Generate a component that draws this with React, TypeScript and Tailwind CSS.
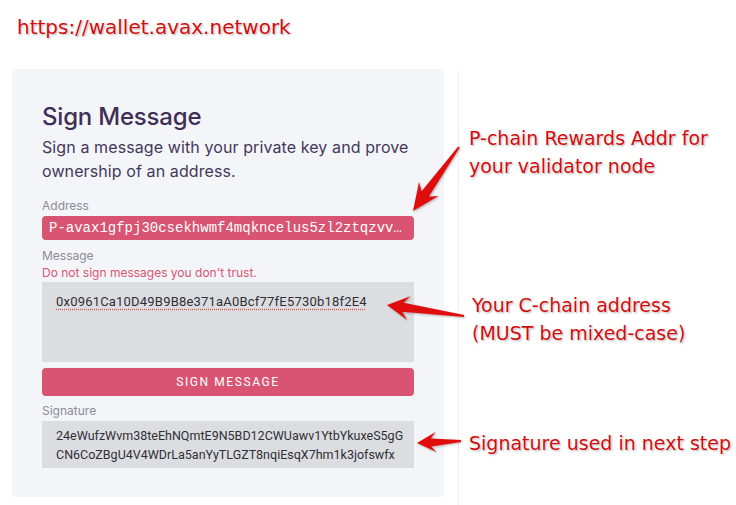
import React from "react";

type Pt = [number, number];

function arrowPoints(tail: Pt, tip: Pt, headLen: number, headHalf: number, shaftTip: number, shaftTail: number, notch: number): string {
  const dx = tip[0] - tail[0];
  const dy = tip[1] - tail[1];
  const len = Math.hypot(dx, dy);
  const ux = dx / len;
  const uy = dy / len;
  const nx = -uy;
  const ny = ux;
  const at = (d: number, s: number): Pt => [tail[0] + ux * d + nx * s, tail[1] + uy * d + ny * s];
  const hb = len - headLen;
  const pts: Pt[] = [
    at(0, shaftTail),
    at(hb + notch, shaftTip),
    at(hb, headHalf),
    at(len, 0),
    at(hb, -headHalf),
    at(hb + notch, -shaftTip),
    at(0, -shaftTail),
  ];
  return pts.map((p) => `${p[0].toFixed(1)},${p[1].toFixed(1)}`).join(" ");
}

const annotBase =
  "text-[#d10c0c] leading-[28px] font-['DejaVu_Sans',sans-serif] [text-shadow:0_0_2px_#fff,0_0_2px_#fff,1px_1px_2px_#9a9a9a] whitespace-nowrap";
const annot = annotBase + " text-[19px]";

const label = "text-[12px] leading-[14px] text-[#8b8b95]";

export default function App() {
  return (
    <div className="relative w-[736px] h-[505px] bg-white overflow-hidden font-['Inter',sans-serif] flex flex-col">
      <div className={annotBase + " text-[20px] pl-[17px] pt-[13px] h-[69px]"}>https://wallet.avax.network</div>

      <div className="flex flex-1">
        <div className="pl-[12px] pr-[14px]">
          <div className="w-[432px] h-[428px] bg-[#f4f5f9] rounded-[4px] px-[30px] pt-[34px] flex flex-col">
            <h1 className="text-[24px] leading-[28px] font-medium text-[#3e2f55] tracking-[-0.2px]">Sign Message</h1>
            <p className="mt-[4px] text-[16px] leading-[24px] text-[#43385a] tracking-[0.1px]">
              Sign a message with your private key and prove ownership of an address.
            </p>

            <div className={label + " mt-[16px]"}>Address</div>
            <div className="mt-[3px] h-[24px] rounded-[4px] bg-[#d85472] px-[7px] flex items-center text-white text-[14px] font-['Liberation_Mono',monospace] whitespace-nowrap overflow-hidden">
              P-avax1gfpj30csekhwmf4mqkncelus5zl2ztqzvv…
            </div>

            <div className={label + " mt-[9px]"}>Message</div>
            <div className="mt-[3px] text-[12px] leading-[14px] text-[#d85472]">Do not sign messages you don't trust.</div>
            <div className="mt-[2px] h-[80px] bg-[#dcdde1] px-[14px] pt-[11px] text-[13px] leading-[18px] text-[#2f2f36] font-['Roboto',sans-serif] tracking-[0.2px]">
              <span className="underline decoration-dotted decoration-[#e0533e] underline-offset-[3px]">
                0x0961Ca10D49B9B8e371aA0Bcf77fE5730b18f2E4
              </span>
            </div>

            <button className="mt-[6px] w-full h-[28px] rounded-[4px] bg-[#d85472] text-white text-[12px] tracking-[1.6px] font-['Roboto',sans-serif] flex items-center justify-center">
              SIGN MESSAGE
            </button>

            <div className={label + " mt-[8px]"}>Signature</div>
            <div className="mt-[3px] h-[47px] bg-[#dcdde1] px-[14px] pt-[5px] text-[12.5px] leading-[19px] text-[#2f2f36] font-['Roboto',sans-serif] whitespace-nowrap overflow-hidden">
              <div>24eWufzWvm38teEhNQmtE9N5BD12CWUawv1YtbYkuxeS5gG</div>
              <div>CN6CoZBgU4V4WDrLa5anYyTLGZT8nqiEsqX7hm1k3jofswfx</div>
            </div>
          </div>
        </div>

        <div className="flex-1 border-l border-[#eef0f3] pl-[10px] pt-[54px] flex flex-col mt-[1px]">
          <div className={annot}>
            P-chain Rewards Addr for
            <br />
            your validator node
          </div>
          <div className={annot + " mt-[111px] pl-[3px]"}>
            Your C-chain address
            <br />
            (MUST be mixed-case)
          </div>
          <div className={annot + " mt-[82px]"}>Signature used in next step</div>
        </div>
      </div>

      <svg className="absolute left-0 top-0 pointer-events-none" width="736" height="505" viewBox="0 0 736 505">
        <defs>
          <filter id="sh" x="-20%" y="-20%" width="140%" height="140%">
            <feDropShadow dx="1" dy="1" stdDeviation="1" floodColor="#000" floodOpacity="0.3" />
          </filter>
        </defs>
        <g fill="#e00d0d" filter="url(#sh)">
          <polygon points={arrowPoints([459, 147], [413, 211], 27, 12, 4.5, 1, 6)} />
          <polygon points={arrowPoints([464, 316], [387, 305], 22, 12, 4.5, 1, 6)} />
          <polygon points={arrowPoints([461, 441], [417, 443], 19, 10, 4, 1, 5)} />
        </g>
      </svg>
    </div>
  );
}
